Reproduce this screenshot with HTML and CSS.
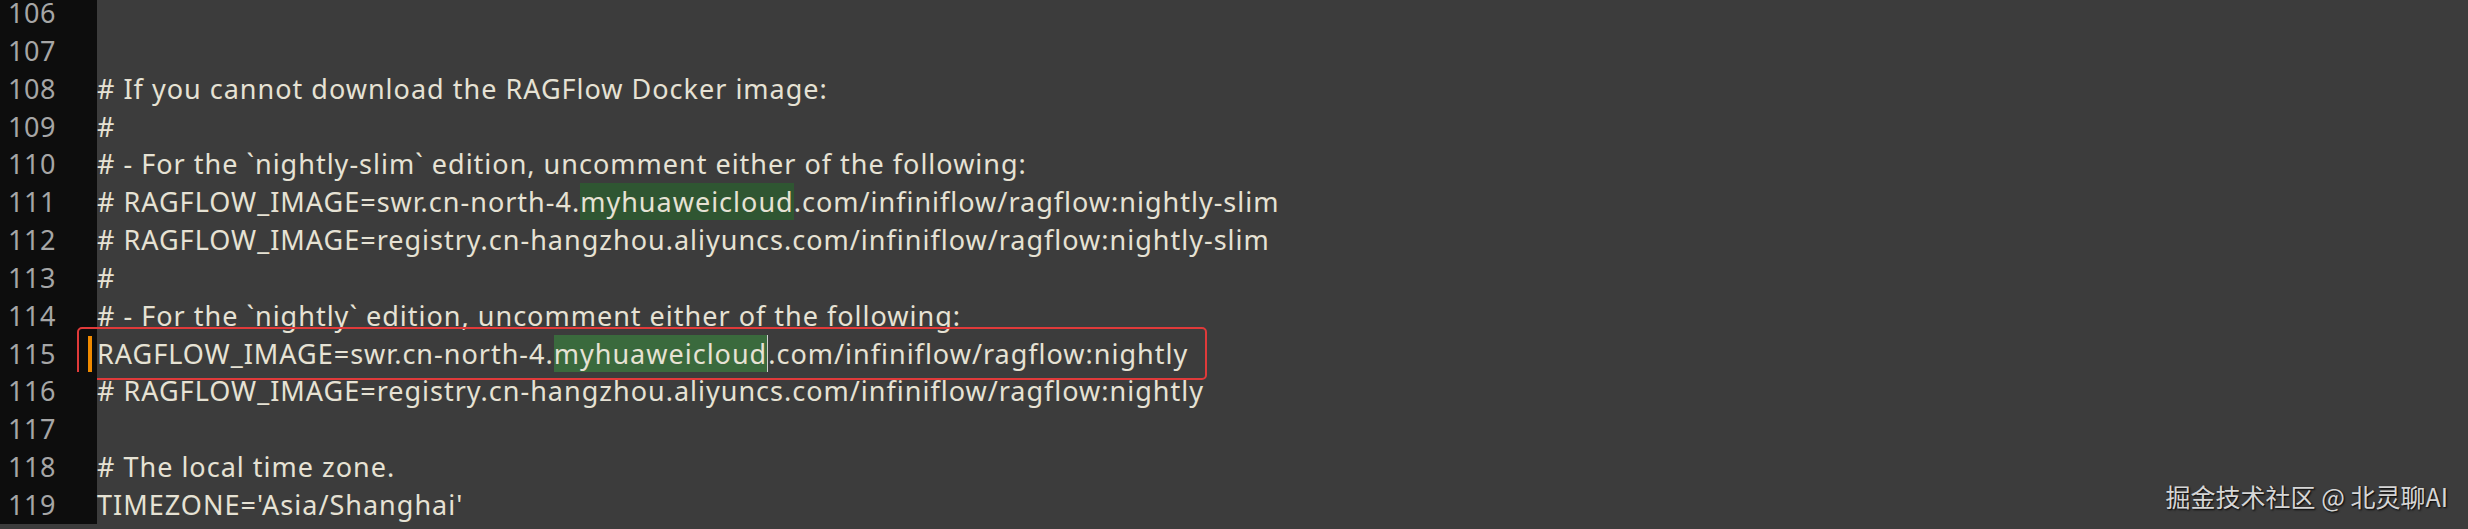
FILE: index.html
```html
<!DOCTYPE html>
<html>
<head>
<meta charset="utf-8">
<link rel="stylesheet" href="styles.css">
</head>
<body>
<div class="editor">
  <div class="lines">
    <div class="row"><span class="num">106</span><span class="code"></span></div>
    <div class="row"><span class="num">107</span><span class="code"></span></div>
    <div class="row"><span class="num">108</span><span class="code"># If you cannot download the RAGFlow Docker image:</span></div>
    <div class="row"><span class="num">109</span><span class="code">#</span></div>
    <div class="row"><span class="num">110</span><span class="code"># - For the `nightly-slim` edition, uncomment either of the following:</span></div>
    <div class="row"><span class="num">111</span><span class="code"># RAGFLOW_IMAGE=swr.cn-north-4.<span class="hl">myhuaweicloud</span>.com/infiniflow/ragflow:nightly-slim</span></div>
    <div class="row"><span class="num">112</span><span class="code"># RAGFLOW_IMAGE=registry.cn-hangzhou.aliyuncs.com/infiniflow/ragflow:nightly-slim</span></div>
    <div class="row"><span class="num">113</span><span class="code">#</span></div>
    <div class="row"><span class="num">114</span><span class="code"># - For the `nightly` edition, uncomment either of the following:</span></div>
    <div class="row current"><span class="num">115</span><span class="code">RAGFLOW_IMAGE=swr.cn-north-4.<span class="hl hl-sel">myhuaweicloud</span>.com/infiniflow/ragflow:nightly</span><span class="caret"></span><span class="mark"></span></div>
    <div class="row"><span class="num">116</span><span class="code"># RAGFLOW_IMAGE=registry.cn-hangzhou.aliyuncs.com/infiniflow/ragflow:nightly</span></div>
    <div class="row"><span class="num">117</span><span class="code"></span></div>
    <div class="row"><span class="num">118</span><span class="code"># The local time zone.</span></div>
    <div class="row"><span class="num">119</span><span class="code">TIMEZONE='Asia/Shanghai'</span></div>
  </div>
  <div class="watermark">掘金技术社区 @ 北灵聊AI</div>
</div>
</body>
</html>
```
FILE: styles.css
```css
html, body {
  margin: 0;
  padding: 0;
  background: #3c3c3c;
  overflow: hidden;
}
.editor {
  position: relative;
  width: 2468px;
  height: 529px;
  overflow: hidden;
  background: #3c3c3c;
  font-family: "Noto Sans", "Open Sans", sans-serif;
  font-size: 27px;
}
.lines {
  display: flex;
  flex-direction: column;
  margin-top: -6px;
}
.row {
  display: flex;
  height: 37.85px;
  line-height: 37.85px;
  position: relative;
}
.num {
  flex: 0 0 89px;
  padding-left: 8px;
  color: #a6a6a6;
  background: #0d0d0d;
  border-left: 1px solid #4a4a4a;
  margin-left: -1px;
  letter-spacing: 0.5px;
}
.code {
  white-space: pre;
  color: #e6e2d4;
  letter-spacing: 1px;
}
.hl {
  background: #2f5632;
}
.hl-sel {
  background: #3a6a3d;
  border-right: 1px solid #cfcfcf;
}
.caret {
  position: absolute;
  left: 88px;
  top: 1px;
  width: 4px;
  height: 37px;
  background: #f08a00;
}
.mark {
  position: absolute;
  left: 77px;
  top: -8px;
  width: 1126px;
  height: 49px;
  border: 2px solid #e03a3a;
  border-radius: 5px;
}
.watermark {
  position: absolute;
  right: 20px;
  bottom: 15px;
  font-family: "Noto Sans CJK SC", sans-serif;
  font-size: 25px;
  color: #d6d6d6;
  text-shadow: 1px 1px 2px #000;
}
```
